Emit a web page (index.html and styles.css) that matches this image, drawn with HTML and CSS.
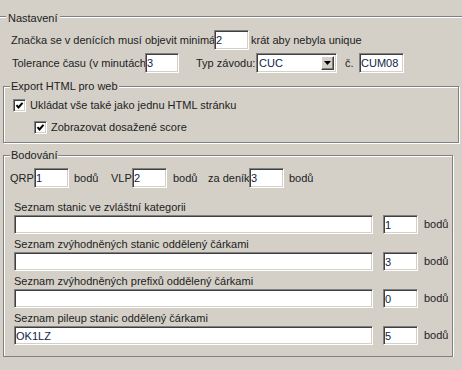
FILE: index.html
```html
<!DOCTYPE html>
<html lang="cs">

<head>
    <meta charset="UTF-8">
    <title>Nastavení</title>
    <link rel="stylesheet" href="styles.css">
</head>

<body>
    <div class="dialog">
        <fieldset class="group group-top">
            <legend>Nastavení</legend>
            <div class="row">
                <span class="lbl lbl-min">Značka se v denících musí objevit minimá</span>
                <input class="field field-min" type="text" value="2">
                <span class="lbl lbl-after">krát aby nebyla unique</span>
            </div>
            <div class="row row-second">
                <span class="lbl lbl-tol">Tolerance času (v minutách</span>
                <input class="field field-tol" type="text" value="3">
                <span class="lbl lbl-typ">Typ závodu:</span>
                <div class="combo">
                    <span class="combo-text">CUC</span>
                    <span class="combo-btn">
                        <svg width="7" height="4" viewBox="0 0 7 4"><path d="M0 0h7L3.5 4z" fill="#000"/></svg>
                    </span>
                </div>
                <span class="lbl lbl-c">č.</span>
                <input class="field field-code" type="text" value="CUM08">
            </div>
        </fieldset>

        <fieldset class="group group-export">
            <legend>Export HTML pro web</legend>
            <div class="check-row">
                <span class="check"><svg width="9" height="9" viewBox="0 0 9 9"><path d="M1.5 4.2l2 2.2 4-4.6" fill="none" stroke="#000" stroke-width="2"/></svg></span>
                Ukládat vše také jako jednu HTML stránku
            </div>
            <div class="check-row check-sub">
                <span class="check"><svg width="9" height="9" viewBox="0 0 9 9"><path d="M1.5 4.2l2 2.2 4-4.6" fill="none" stroke="#000" stroke-width="2"/></svg></span>
                Zobrazovat dosažené score
            </div>
        </fieldset>

        <fieldset class="group group-score">
            <legend>Bodování</legend>
            <div class="row points-row">
                <span class="lbl pl-qrp">QRP</span>
                <input class="field field-pt" type="text" value="1">
                <span class="lbl pl-unit">bodů</span>
                <span class="lbl pl-vlp">VLP</span>
                <input class="field field-pt" type="text" value="2">
                <span class="lbl pl-unit pl-unit2">bodů</span>
                <span class="lbl pl-den">za deník</span>
                <input class="field field-pt" type="text" value="3">
                <span class="lbl pl-unit">bodů</span>
            </div>

            <div class="list">
                <div class="list-label">Seznam stanic ve zvláštní kategorii</div>
                <div class="list-row">
                    <input class="field field-list" type="text" value="">
                    <input class="field field-score" type="text" value="1">
                    <span class="lbl list-unit">bodů</span>
                </div>
                <div class="list-label">Seznam zvýhodněných stanic oddělený čárkami</div>
                <div class="list-row">
                    <input class="field field-list" type="text" value="">
                    <input class="field field-score" type="text" value="3">
                    <span class="lbl list-unit">bodů</span>
                </div>
                <div class="list-label">Seznam zvýhodněných prefixů oddělený čárkami</div>
                <div class="list-row">
                    <input class="field field-list" type="text" value="">
                    <input class="field field-score" type="text" value="0">
                    <span class="lbl list-unit">bodů</span>
                </div>
                <div class="list-label">Seznam pileup stanic oddělený čárkami</div>
                <div class="list-row">
                    <input class="field field-list" type="text" value="OK1LZ">
                    <input class="field field-score" type="text" value="5">
                    <span class="lbl list-unit">bodů</span>
                </div>
            </div>
        </fieldset>
    </div>
</body>

</html>
```

FILE: styles.css
```css
* {
    box-sizing: border-box;
}

body {
    margin: 0;
    background-color: #d4d0c8;
    font: 11px/15px "Liberation Sans", Arial, sans-serif;
    color: #222;
}

/* group boxes */
.group {
    margin: 0;
    min-width: 0;
    border: 1px solid #808080;
    box-shadow: inset 1px 1px 0 #fff, 1px 1px 0 #fff;
}

.group legend {
    padding: 0 1px;
    line-height: 14px;
    background-color: #d4d0c8;
}

.group-top {
    margin-top: 8px;
    border: 0;
    border-top: 1px solid #808080;
    box-shadow: inset 0 1px 0 #fff;
    padding: 5px 0 6px 6px;
}

.group-top legend {
    padding: 3px 2px 0;
}

.group-export {
    margin-left: 3px;
    width: 456px;
    padding: 1px 0 4px 6px;
}

.group-score {
    margin: 5px 0 0 3px;
    width: 450px;
    padding: 6px 0 11px 6px;
}

/* rows */
.row {
    display: flex;
    align-items: center;
    height: 20px;
}

.group-top .row {
    padding-left: 5px;
}

.row-second {
    margin-top: 3px;
}

.lbl {
    white-space: nowrap;
    flex: none;
}

.lbl-min {
    width: 203px;
}

.lbl-after {
    margin-left: 2px;
}

.lbl-tol {
    width: 133px;
    margin-left: 1px;
}

.lbl-typ {
    width: 60px;
    margin-left: 17px;
}

.lbl-c {
    width: 14px;
    margin-left: 8px;
}

/* inputs */
.field {
    flex: none;
    height: 20px;
    margin: 0;
    padding: 0 1px;
    font: 11px "Liberation Sans", Arial, sans-serif;
    color: #0e1e4a;
    background-color: #fff;
    border: 1px solid;
    border-color: #808080 #fff #fff #808080;
    box-shadow: inset 1px 1px 0 #404040, inset -1px -1px 0 #d4d0c8;
    outline: none;
}

.field-min {
    width: 35px;
}

.field-tol {
    width: 34px;
}

.field-code {
    width: 45px;
}

.field-pt {
    width: 35px;
}

/* combo box */
.combo {
    flex: none;
    display: flex;
    align-items: center;
    width: 81px;
    height: 20px;
    background-color: #fff;
    border: 1px solid;
    border-color: #808080 #fff #fff #808080;
    box-shadow: inset 1px 1px 0 #404040, inset -1px -1px 0 #d4d0c8;
}

.combo-text {
    flex: 1;
    padding-left: 2px;
    color: #0e1e4a;
}

.combo-btn {
    display: flex;
    align-items: center;
    justify-content: center;
    width: 13px;
    height: 14px;
    margin-right: 2px;
    background-color: #d4d0c8;
    border: 1px solid;
    border-color: #fff #404040 #404040 #fff;
    box-shadow: inset -1px -1px 0 #808080;
}

/* checkboxes */
.check-row {
    display: flex;
    align-items: center;
    height: 22px;
    padding-left: 3px;
}

.check-sub {
    padding-left: 24px;
}

.check {
    display: flex;
    align-items: center;
    justify-content: center;
    width: 13px;
    height: 13px;
    margin-right: 4px;
    background-color: #fff;
    border: 1px solid;
    border-color: #808080 #fff #fff #808080;
    box-shadow: inset 1px 1px 0 #404040, inset -1px -1px 0 #d4d0c8;
}

/* points */
.pl-qrp {
    width: 24px;
}

.pl-vlp {
    width: 21px;
}

.pl-den {
    width: 41px;
}

.pl-unit {
    width: 42px;
    padding-left: 5px;
}

.pl-unit2 {
    width: 41px;
    padding-left: 6px;
}

/* lists */
.list {
    padding-left: 4px;
}

.list-label {
    margin-top: 3px;
    height: 15px;
    white-space: nowrap;
}

.list-label:first-child {
    margin-top: 12px;
}

.list-row {
    display: flex;
    align-items: center;
    height: 19px;
}

.list-row .field {
    height: 19px;
}

.field-list {
    width: 359px;
}

.field-score {
    width: 35px;
    margin-left: 10px;
}

.list-unit {
    margin-left: 6px;
}
```
